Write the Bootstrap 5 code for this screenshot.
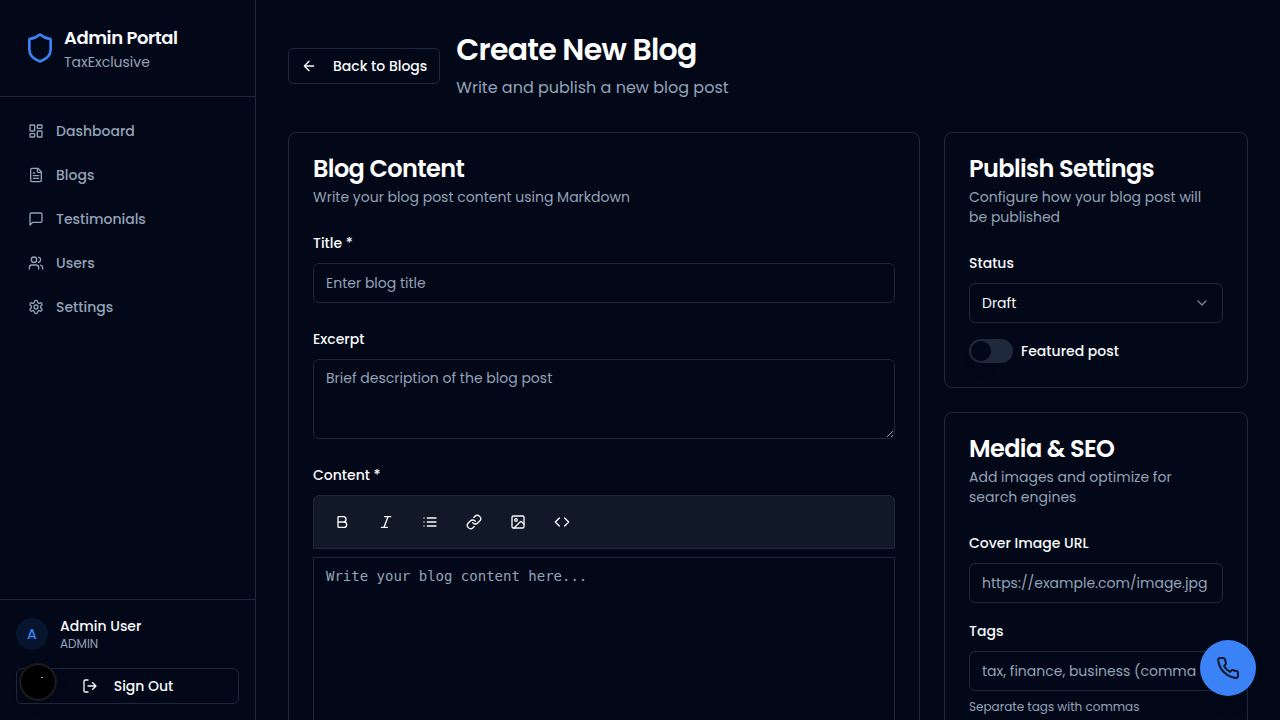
<!DOCTYPE html>
<html lang="en" data-bs-theme="dark">
<head>
<meta charset="utf-8">
<meta name="viewport" content="width=device-width, initial-scale=1">
<title>Create New Blog</title>
<link href="https://cdn.jsdelivr.net/npm/bootstrap@5.3.0/dist/css/bootstrap.min.css" rel="stylesheet">
<style>
:root{--ink:#f8fafc;--muted:#94a3b8;--line:#1e293b;--page:#020817;--brand:#3b82f6}
body{background:var(--page);color:var(--ink);font-family:Poppins,Inter,"Liberation Sans",sans-serif;font-size:14px;line-height:20px;height:100vh;overflow:hidden}
svg{fill:none;stroke:currentColor;stroke-width:2;stroke-linecap:round;stroke-linejoin:round;flex:none}
.line{border-color:var(--line)!important}
.soft{color:var(--muted)}
.medium{font-weight:500}
.sidebar{width:256px;border-right:1px solid}
.brand-name{font-size:18px;line-height:28px;font-weight:600;letter-spacing:-.025em}
.tiny{font-size:12px;line-height:16px}
.sidebar .nav-link{height:36px;padding:0 12px;color:var(--muted);font-weight:500;gap:12px}
.avatar{width:32px;height:32px;background:rgba(59,130,246,.1);color:var(--brand)}
.btn-line{height:36px;padding:0 12px;border:1px solid var(--line);border-radius:6px;color:var(--ink);font-size:14px;line-height:20px;font-weight:500;gap:16px;background:var(--page)}
.page{padding:32px;height:100vh;overflow:hidden}
.page h1{font-size:30px;line-height:36px;font-weight:600;letter-spacing:-.025em}
.lead-in{font-size:16px;line-height:24px}
.panel{background:var(--page);border:1px solid var(--line);border-radius:8px;padding:24px;color:var(--ink)}
.panel h2{font-size:24px;line-height:24px;font-weight:600;margin-bottom:6px;letter-spacing:-.025em}
.panel-head{margin-bottom:24px}
.form-label{display:block;line-height:24px;font-weight:500;margin-bottom:8px}
.panel .form-control,.panel .form-select{background-color:var(--page);border:1px solid var(--line);border-radius:6px;padding:8px 12px;font-size:14px;line-height:20px;color:var(--ink);min-height:40px}
.panel .form-select{background-image:none}
.panel .form-control::placeholder{color:var(--muted)}
.panel input.form-control,.panel .form-select{height:40px}
.panel textarea.excerpt{height:80px;color-scheme:light}
.panel textarea.editor{height:400px;border-radius:0 0 6px 6px;font-family:"DejaVu Sans Mono",monospace}
.toolbar{background:#111827;border:1px solid var(--line);border-radius:6px 6px 0 0;padding:8px;gap:4px;margin-bottom:8px}
.toolbar .btn{width:40px;height:36px;padding:0;color:var(--ink);border:0}
.toggle{width:44px;height:24px;padding:2px;background:var(--line)}
.toggle span{width:20px;height:20px;background:var(--page);box-shadow:0 10px 15px -3px rgba(0,0,0,.1)}
.call{right:24px;bottom:24px;width:56px;height:56px;padding:0;border:0;background:var(--brand)!important;color:#0f172a!important;box-shadow:0 10px 15px -3px rgba(0,0,0,.1),0 4px 6px -4px rgba(0,0,0,.1)}
.devtool{left:20px;bottom:20px;width:36px;height:36px;background:#000;box-shadow:0 0 0 1px #171717,inset 0 0 0 1px #262626,0 4px 12px rgba(0,0,0,.2)}
.devtool::after{content:"";position:absolute;left:21px;top:13px;width:2px;height:1px;background:#aaa}
</style>
</head>
<body class="d-flex">
<aside class="sidebar line d-flex flex-column h-100 flex-shrink-0">
  <div class="d-flex align-items-center gap-2 p-4 border-bottom line">
    <svg width="32" height="32" viewBox="0 0 24 24" style="color:var(--brand)"><path d="M20 13c0 5-3.5 7.5-7.66 8.95a1 1 0 0 1-.67-.01C7.5 20.5 4 18 4 13V6a1 1 0 0 1 1-1c2 0 4.5-1.2 6.24-2.72a1.17 1.17 0 0 1 1.52 0C14.51 3.81 17 5 19 5a1 1 0 0 1 1 1z"/></svg>
    <div><div class="brand-name">Admin Portal</div><div class="soft">TaxExclusive</div></div>
  </div>
  <nav class="nav flex-column flex-nowrap gap-2 p-3 flex-grow-1">
    <a class="nav-link d-flex align-items-center" href="#"><svg width="16" height="16" viewBox="0 0 24 24"><rect width="7" height="9" x="3" y="3" rx="1"/><rect width="7" height="5" x="14" y="3" rx="1"/><rect width="7" height="9" x="14" y="12" rx="1"/><rect width="7" height="5" x="3" y="16" rx="1"/></svg>Dashboard</a>
    <a class="nav-link d-flex align-items-center" href="#"><svg width="16" height="16" viewBox="0 0 24 24"><path d="M15 2H6a2 2 0 0 0-2 2v16a2 2 0 0 0 2 2h12a2 2 0 0 0 2-2V7Z"/><path d="M14 2v4a2 2 0 0 0 2 2h4M10 9H8M16 13H8M16 17H8"/></svg>Blogs</a>
    <a class="nav-link d-flex align-items-center" href="#"><svg width="16" height="16" viewBox="0 0 24 24"><path d="M21 15a2 2 0 0 1-2 2H7l-4 4V5a2 2 0 0 1 2-2h14a2 2 0 0 1 2 2z"/></svg>Testimonials</a>
    <a class="nav-link d-flex align-items-center" href="#"><svg width="16" height="16" viewBox="0 0 24 24"><path d="M16 21v-2a4 4 0 0 0-4-4H6a4 4 0 0 0-4 4v2"/><circle cx="9" cy="7" r="4"/><path d="M22 21v-2a4 4 0 0 0-3-3.87M16 3.13a4 4 0 0 1 0 7.75"/></svg>Users</a>
    <a class="nav-link d-flex align-items-center" href="#"><svg width="16" height="16" viewBox="0 0 24 24"><path d="M12.22 2h-.44a2 2 0 0 0-2 2v.18a2 2 0 0 1-1 1.73l-.43.25a2 2 0 0 1-2 0l-.15-.08a2 2 0 0 0-2.73.73l-.22.38a2 2 0 0 0 .73 2.73l.15.1a2 2 0 0 1 1 1.72v.51a2 2 0 0 1-1 1.74l-.15.09a2 2 0 0 0-.73 2.73l.22.38a2 2 0 0 0 2.73.73l.15-.08a2 2 0 0 1 2 0l.43.25a2 2 0 0 1 1 1.73V20a2 2 0 0 0 2 2h.44a2 2 0 0 0 2-2v-.18a2 2 0 0 1 1-1.73l.43-.25a2 2 0 0 1 2 0l.15.08a2 2 0 0 0 2.73-.73l.22-.39a2 2 0 0 0-.73-2.73l-.15-.08a2 2 0 0 1-1-1.74v-.5a2 2 0 0 1 1-1.74l.15-.09a2 2 0 0 0 .73-2.73l-.22-.38a2 2 0 0 0-2.73-.73l-.15.08a2 2 0 0 1-2 0l-.43-.25a2 2 0 0 1-1-1.73V4a2 2 0 0 0-2-2z"/><circle cx="12" cy="12" r="3"/></svg>Settings</a>
  </nav>
  <div class="border-top line p-3">
    <div class="d-flex align-items-center mb-3">
      <div class="avatar rounded-circle d-flex align-items-center justify-content-center medium me-2">A</div>
      <div class="ms-1"><div class="medium">Admin User</div><div class="tiny soft">ADMIN</div></div>
    </div>
    <button class="btn btn-line w-100 d-flex align-items-center justify-content-center"><svg width="16" height="16" viewBox="0 0 24 24"><path d="M9 21H5a2 2 0 0 1-2-2V5a2 2 0 0 1 2-2h4M16 17l5-5-5-5M21 12H9"/></svg>Sign Out</button>
  </div>
</aside>

<main class="page flex-grow-1">
  <header class="d-flex align-items-center gap-3 mb-4 pb-2">
    <button class="btn btn-line d-flex align-items-center text-nowrap"><svg width="16" height="16" viewBox="0 0 24 24"><path d="m12 19-7-7 7-7M19 12H5"/></svg>Back to Blogs</button>
    <div><h1 class="mb-2">Create New Blog</h1><p class="lead-in soft mb-0">Write and publish a new blog post</p></div>
  </header>
  <div class="row g-4">
    <div class="col-8">
      <section class="panel">
        <div class="panel-head"><h2>Blog Content</h2><div class="soft">Write your blog post content using Markdown</div></div>
        <div class="mb-4"><label class="form-label" for="title">Title *</label><input id="title" class="form-control" placeholder="Enter blog title"></div>
        <div class="mb-4"><label class="form-label" for="excerpt">Excerpt</label><textarea id="excerpt" class="form-control excerpt" placeholder="Brief description of the blog post"></textarea></div>
        <label class="form-label" for="content">Content *</label>
        <div class="toolbar d-flex">
          <button class="btn d-flex align-items-center justify-content-center" aria-label="Bold"><svg width="16" height="16" viewBox="0 0 24 24"><path d="M6 12h9a4 4 0 0 1 0 8H7a1 1 0 0 1-1-1V5a1 1 0 0 1 1-1h7a4 4 0 0 1 0 8"/></svg></button>
          <button class="btn d-flex align-items-center justify-content-center" aria-label="Italic"><svg width="16" height="16" viewBox="0 0 24 24"><path d="M19 4h-9M14 20H5M15 4 9 20"/></svg></button>
          <button class="btn d-flex align-items-center justify-content-center" aria-label="List"><svg width="16" height="16" viewBox="0 0 24 24"><path d="M3 12h.01M3 18h.01M3 6h.01M8 12h13M8 18h13M8 6h13"/></svg></button>
          <button class="btn d-flex align-items-center justify-content-center" aria-label="Link"><svg width="16" height="16" viewBox="0 0 24 24"><path d="M10 13a5 5 0 0 0 7.54.54l3-3a5 5 0 0 0-7.07-7.07l-1.72 1.71"/><path d="M14 11a5 5 0 0 0-7.54-.54l-3 3a5 5 0 0 0 7.07 7.07l1.71-1.71"/></svg></button>
          <button class="btn d-flex align-items-center justify-content-center" aria-label="Image"><svg width="16" height="16" viewBox="0 0 24 24"><rect width="18" height="18" x="3" y="3" rx="2"/><circle cx="9" cy="9" r="2"/><path d="m21 15-3.086-3.086a2 2 0 0 0-2.828 0L6 21"/></svg></button>
          <button class="btn d-flex align-items-center justify-content-center" aria-label="Code"><svg width="16" height="16" viewBox="0 0 24 24"><path d="m16 18 6-6-6-6M8 6l-6 6 6 6"/></svg></button>
        </div>
        <textarea id="content" class="form-control editor" placeholder="Write your blog content here..."></textarea>
      </section>
    </div>
    <div class="col-4 d-flex flex-column gap-4">
      <section class="panel">
        <div class="panel-head"><h2>Publish Settings</h2><div class="soft">Configure how your blog post will be published</div></div>
        <div class="mb-3"><label class="form-label">Status</label>
          <button class="form-select d-flex align-items-center justify-content-between"><span>Draft</span><svg class="opacity-50" width="16" height="16" viewBox="0 0 24 24"><path d="m6 9 6 6 6-6"/></svg></button></div>
        <div class="d-flex align-items-center gap-2"><div class="toggle rounded-pill" role="switch" aria-checked="false"><span class="d-block rounded-circle"></span></div><span class="medium">Featured post</span></div>
      </section>
      <section class="panel flex-grow-1">
        <div class="panel-head"><h2>Media &amp; SEO</h2><div class="soft">Add images and optimize for search engines</div></div>
        <div class="mb-3"><label class="form-label" for="cover">Cover Image URL</label><input id="cover" class="form-control" placeholder="https://example.com/image.jpg"></div>
        <div><label class="form-label" for="tags">Tags</label><input id="tags" class="form-control mb-2" placeholder="tax, finance, business (comma separated)"><div class="tiny soft">Separate tags with commas</div></div>
      </section>
    </div>
  </div>
</main>
<button class="btn call rounded-circle position-fixed d-flex align-items-center justify-content-center" aria-label="Call"><svg width="24" height="24" viewBox="0 0 24 24"><path d="M22 16.92v3a2 2 0 0 1-2.18 2 19.79 19.79 0 0 1-8.63-3.07 19.5 19.5 0 0 1-6-6 19.79 19.79 0 0 1-3.07-8.67A2 2 0 0 1 4.11 2h3a2 2 0 0 1 2 1.72 12.84 12.84 0 0 0 .7 2.81 2 2 0 0 1-.45 2.11L8.09 9.91a16 16 0 0 0 6 6l1.27-1.27a2 2 0 0 1 2.11-.45 12.84 12.84 0 0 0 2.81.7A2 2 0 0 1 22 16.92z"/></svg></button>
<div class="devtool rounded-circle position-fixed"></div>
<script src="https://cdn.jsdelivr.net/npm/bootstrap@5.3.0/dist/js/bootstrap.bundle.min.js"></script>
</body>
</html>
